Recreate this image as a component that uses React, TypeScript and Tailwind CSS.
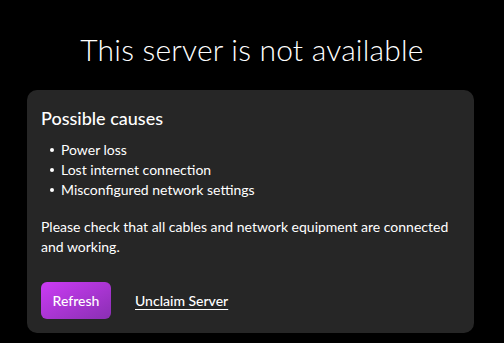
import React from 'react';

const causes = ['Power loss', 'Lost internet connection', 'Misconfigured network settings'];

const App: React.FC = () => {
  return (
    <div className="min-h-screen bg-black text-white px-[27px] pt-[29px] font-['Lato',sans-serif]">
      <h1 className="text-center text-[30px] leading-[40px] font-light tracking-[0.2px]">
        This server is not available
      </h1>

      <div className="mt-[21px] w-[447px] rounded-[10px] bg-[#262626] px-[14px] pt-[16px] pb-[14px]">
        <h2 className="text-[18px] leading-[24px] font-medium">Possible causes</h2>

        <ul className="mt-[10px] ml-[9px] text-[14px] leading-[20px]">
          {causes.map(c => (
            <li key={c} className="flex items-center">
              <span className="mr-[7px] inline-block h-[4px] w-[4px] rounded-full bg-white" />
              {c}
            </li>
          ))}
        </ul>

        <p className="mt-[17px] text-[14px] leading-[20px]">
          Please check that all cables and network equipment are connected and working.
        </p>

        <div className="mt-[25px] flex items-center gap-[24px]">
          <button className="h-[37px] w-[70px] rounded-[6px] bg-gradient-to-br from-[#cc3bf5] to-[#8a2fb3] text-[14px] font-medium text-white">
            Refresh
          </button>
          <button className="text-[14px] font-medium text-white underline underline-offset-[3px]">
            Unclaim Server
          </button>
        </div>
      </div>
    </div>
  );
};

export default App;
